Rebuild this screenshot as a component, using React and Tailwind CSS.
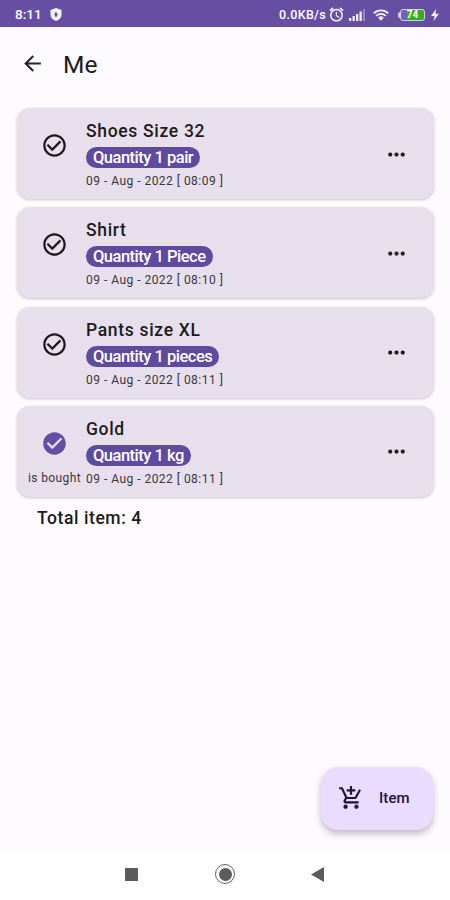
import {
    MdAddShoppingCart,
    MdAlarm,
    MdArrowBack,
    MdCheckCircle,
    MdCheckCircleOutline,
    MdMoreHoriz,
} from "react-icons/md";

const items = [
    { name: "Shoes Size 32", quantity: "Quantity 1 pair", date: "09 - Aug - 2022 [ 08:09 ]", bought: false },
    { name: "Shirt", quantity: "Quantity 1 Piece", date: "09 - Aug - 2022 [ 08:10 ]", bought: false },
    { name: "Pants size XL", quantity: "Quantity 1 pieces", date: "09 - Aug - 2022 [ 08:11 ]", bought: false },
    { name: "Gold", quantity: "Quantity 1 kg", date: "09 - Aug - 2022 [ 08:11 ]", bought: true },
];

function StatusBar() {
    return (
        <header className="flex h-[27px] items-center bg-[#664fa3] pl-[15px] pr-[11px] pt-[2px] text-white">
            <span className="w-[27px] whitespace-nowrap text-[13.5px] font-medium leading-none">8:11</span>
            <svg className="ml-[8px] h-[13px] w-[12px]" viewBox="0 0 12 13">
                <path d="M6 0 11.500 2v5c0 3-2.500 5-5.500 6C3 12 .5 10 .5 7V2z" fill="#f4f0fb" />
                <path d="M6 3.500 4.300 6.500 6 9.500 7.700 6.500z" fill="#664fa3" />
            </svg>

            <span className="ml-auto whitespace-nowrap pt-px text-[12.5px] font-medium leading-none tracking-[0.3px]">0.0KB/s</span>
            <MdAlarm className="ml-[2px] size-[17px]" />
            <svg className="ml-[4px] h-[12px] w-[17px]" viewBox="0 0 17 12" fill="#f1ecfa">
                <rect x="0" y="9" width="2.300" height="3" />
                <rect x="3.500" y="7" width="2.300" height="5" />
                <rect x="7" y="5" width="2.300" height="7" />
                <rect x="10.500" y="2.500" width="2.300" height="9.500" />
                <rect x="14" y="0" width="2" height="12" opacity=".35" />
            </svg>
            <svg className="ml-[7px] h-[12px] w-[16px]" viewBox="0 0 16 12" fill="none" stroke="#f4f0fb" strokeWidth="1.800">
                <path d="M.8 4.300a10.300 10.300 0 0 1 14.400 0M3.300 6.900a6.700 6.700 0 0 1 9.400 0" />
                <path d="M5.200 8.700a4 4 0 0 1 5.600 0L8 11.700z" fill="#f4f0fb" stroke="none" />
            </svg>
            <div className="ml-[9px] flex items-center">
                <span className="h-[6px] w-[2px] rounded-l-sm bg-[#d9d0ea]" />
                <span className="flex h-[12px] w-[25px] items-center justify-center rounded-[3px] border border-[#d9d0ea] bg-linear-to-r from-[#7862ad] from-25% to-[#36ad19] to-25% text-[10px] font-bold leading-none">
                    74
                </span>
            </div>
            <svg className="ml-[6px] h-[12px] w-[8px]" viewBox="0 0 8 12">
                <path d="M5 0 0 7h3.500L2.500 12 8 4.800H4.500z" fill="#f4f0fb" />
            </svg>
        </header>
    );
}

function ItemCard({ item }) {
    return (
        <li className="flex h-[91px] rounded-[13px] bg-[#e7dfeb] shadow-[0_1px_3px_rgba(60,50,70,0.28)]">
            <div className="flex w-[69px] flex-col items-center pl-[6px] pt-[24px]">
                {item.bought
                    ? <MdCheckCircle className="size-[27px] shrink-0 text-[#644da2]" />
                    : <MdCheckCircleOutline className="size-[27px] shrink-0 text-[#1c1822]" />}
                {item.bought && (
                    <span className="mt-[14px] whitespace-nowrap text-[12px] leading-[14px] tracking-[0.4px] text-[#39353d]">
                        is bought
                    </span>
                )}
            </div>

            <div className="flex flex-1 flex-col items-start pt-[12px]">
                <h2 className="whitespace-nowrap text-[17.5px] font-medium leading-[22px] tracking-[0.68px] text-[#1d1a20]">
                    {item.name}
                </h2>
                <span className="mt-[5px] h-[21px] whitespace-nowrap rounded-full bg-[#604a9f] px-[7px] text-[16.5px] font-medium leading-[22px] tracking-[-0.5px] text-white">
                    {item.quantity}
                </span>
                <time className="mt-[6px] whitespace-nowrap text-[12px] leading-[14px] tracking-[0.48px] text-[#39353d]">
                    {item.date}
                </time>
            </div>

            <button className="mr-[25px] mt-[33.5px] size-[25px]">
                <MdMoreHoriz className="size-[25px] text-[#18151c]" />
            </button>
        </li>
    );
}

function NavBar() {
    return (
        <nav className="flex h-[50px] items-center bg-white pb-[2px] pl-[125px] pr-[126px]">
            <span className="size-[13px] bg-[#5b5b5b]" />
            <span className="ml-[77px] flex size-[20px] items-center justify-center rounded-full border-[1.5px] border-[#626262]">
                <span className="size-[13px] rounded-full bg-[#5b5b5b]" />
            </span>
            <svg className="ml-auto h-[15px] w-[13px]" viewBox="0 0 13 15">
                <path d="M13 0v15L0 7.500z" fill="#5b5b5b" />
            </svg>
        </nav>
    );
}

export default function App() {
    return (
        <div className="flex h-[900px] w-[450px] flex-col overflow-hidden bg-[#fefbff] font-['Roboto',sans-serif]">
            <StatusBar />

            <div className="flex h-[81px] items-start pl-[20px] pt-[24px]">
                <MdArrowBack className="size-[25px] text-[#29252d]" />
                <h1 className="ml-[18px] text-[24.5px] leading-[28px] text-[#1d1a20]">Me</h1>
            </div>

            <main className="flex-1 pl-[17px] pr-[16px]">
                <ul className="flex flex-col gap-[8.3px]">
                    {items.map((item) => (
                        <ItemCard key={item.name} item={item} />
                    ))}
                </ul>
                <p className="ml-[20px] mt-[10px] text-[17.5px] font-medium leading-[22px] tracking-[0.58px] text-[#1d1a20]">
                    Total item: 4
                </p>
            </main>

            <button className="mb-[20px] mr-[17px] flex h-[63px] w-[112px] items-center self-end rounded-[17px] bg-[#e9dcff] pl-[17px] text-[#211141] shadow-[0_4px_7px_rgba(50,40,60,0.3)]">
                <MdAddShoppingCart className="mb-[2px] size-[26px]" />
                <span className="ml-[15px] text-[15px] font-medium tracking-[0.1px]">Item</span>
            </button>

            <NavBar />
        </div>
    );
}
